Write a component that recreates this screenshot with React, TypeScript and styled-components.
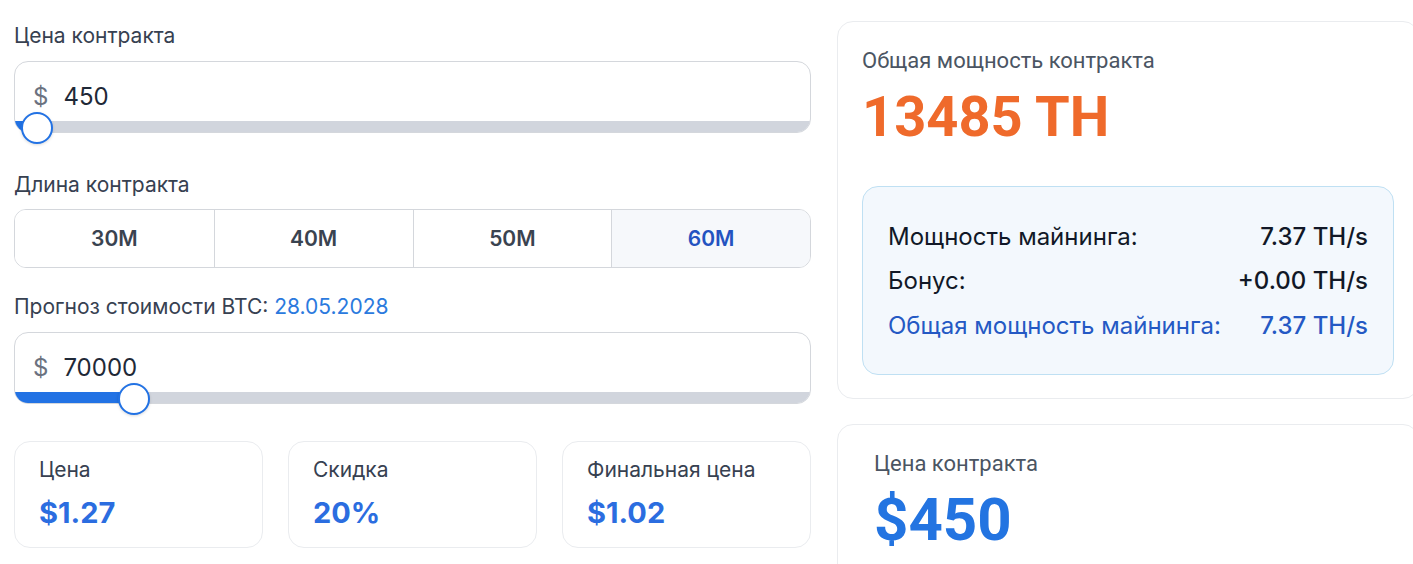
import React from "react";
import styled, { createGlobalStyle } from "styled-components";

const GlobalStyle = createGlobalStyle`
  html, body {
    margin: 0;
    padding: 0;
    background: #ffffff;
    overflow: hidden;
  }
  body {
    font-family: Inter, "Noto Sans", sans-serif;
    color: #1f2937;
  }
`;

const Page = styled.div`
  display: grid;
  grid-template-columns: 797px 582px;
  column-gap: 26px;
  padding: 22px 0 0 14px;
  width: 1440px;
  height: 564px;
  box-sizing: border-box;
  overflow: hidden;
`;

const LeftColumn = styled.div`
  display: flex;
  flex-direction: column;
`;

const RightColumn = styled.div`
  display: flex;
  flex-direction: column;
  gap: 25px;
  margin-top: -1px;
`;

const Label = styled.div<{ $top?: number; $bottom?: number }>`
  font-size: 21px;
  line-height: 28px;
  color: #374151;
  margin-top: ${(p) => p.$top ?? 0}px;
  margin-bottom: ${(p) => p.$bottom ?? 11}px;
`;

const DateText = styled.span`
  color: #2b7ade;
`;

const SliderField = styled.div`
  position: relative;
`;

const FieldBox = styled.div`
  border: 1px solid #d4d7dc;
  border-radius: 14px;
  overflow: hidden;
  background: #fff;
  display: flex;
  flex-direction: column;
`;

const FieldValue = styled.div`
  display: flex;
  align-items: center;
  gap: 15px;
  height: 49px;
  padding: 10px 0 0 18px;
  font-size: 24px;
  color: #1f2937;
`;

const Currency = styled.span`
  color: #6b7280;
`;

const Track = styled.div`
  height: 11px;
  background: #d1d5dd;
  position: relative;
`;

const TrackFill = styled.div`
  position: absolute;
  left: 0;
  top: 0;
  bottom: 0;
  background: #2272e4;
`;

const Thumb = styled.div`
  position: absolute;
  bottom: -11px;
  width: 28px;
  height: 28px;
  margin-left: -16px;
  border-radius: 50%;
  background: #fff;
  border: 2px solid #2272e4;
  box-shadow: 0 1px 3px rgba(0, 0, 0, 0.15);
`;

const Segmented = styled.div`
  display: grid;
  grid-template-columns: repeat(4, 1fr);
  border: 1px solid #d4d7dc;
  border-radius: 12px;
  overflow: hidden;
  height: 59px;
  box-sizing: border-box;
`;

const Segment = styled.div<{ $active?: boolean }>`
  display: flex;
  align-items: center;
  justify-content: center;
  font-size: 21px;
  font-weight: 600;
  color: ${(p) => (p.$active ? "#2453c0" : "#3a4350")};
  background: ${(p) => (p.$active ? "#f6f8fb" : "#fff")};
  border-left: 1px solid #d4d7dc;
  &:first-child {
    border-left: none;
  }
`;

const StatsRow = styled.div`
  display: grid;
  grid-template-columns: repeat(3, 1fr);
  gap: 25px;
  margin-top: 37px;
`;

const StatCard = styled.div`
  border: 1px solid #eaecef;
  border-radius: 16px;
  height: 107px;
  box-sizing: border-box;
  padding: 14px 24px 0;
`;

const StatLabel = styled.div`
  font-size: 21px;
  line-height: 28px;
  color: #374151;
`;

const StatValue = styled.div`
  font-size: 29px;
  line-height: 40px;
  font-weight: 700;
  color: #2b6de0;
  margin-top: 9px;
`;

const Card = styled.div<{ $pad: string }>`
  border: 1px solid #eaecef;
  border-radius: 16px;
  padding: ${(p) => p.$pad};
  box-sizing: border-box;
  font-family: Roboto, "Noto Sans", sans-serif;
`;

const CardLabel = styled.div`
  font-size: 22px;
  line-height: 28px;
  color: #4b5563;
`;

const BigNumber = styled.div<{ $color: string; $size: number }>`
  font-size: ${(p) => p.$size}px;
  line-height: 64px;
  font-weight: 700;
  color: ${(p) => p.$color};
  margin-top: 10px;
`;

const InfoBox = styled.div`
  margin-top: 37px;
  background: #f3f8fd;
  border: 1px solid #bfe0f3;
  border-radius: 16px;
  padding: 34px 25px;
  display: flex;
  flex-direction: column;
  gap: 14.5px;
  font-family: Inter, "Noto Sans", sans-serif;
`;

const InfoRow = styled.div<{ $accent?: boolean }>`
  display: flex;
  justify-content: space-between;
  align-items: center;
  height: 30px;
  font-size: 24px;
  color: ${(p) => (p.$accent ? "#2459c4" : "#111827")};
`;

const InfoValue = styled.span`
  font-weight: 500;
`;

function PriceSlider({
  value,
  percent,
  fill,
}: {
  value: string;
  percent: number;
  fill: number;
}) {
  return (
    <SliderField>
      <FieldBox>
        <FieldValue>
          <Currency>$</Currency>
          <span>{value}</span>
        </FieldValue>
        <Track>
          <TrackFill style={{ width: `${fill}%` }} />
        </Track>
      </FieldBox>
      <Thumb style={{ left: `${percent}%` }} />
    </SliderField>
  );
}

export default function App() {
  const lengths = ["30M", "40M", "50M", "60M"];
  return (
    <>
      <GlobalStyle />
      <Page>
        <LeftColumn>
          <Label>Цена контракта</Label>
          <PriceSlider value="450" percent={2.9} fill={1} />

          <Label $top={38} $bottom={10}>
            Длина контракта
          </Label>
          <Segmented>
            {lengths.map((l) => (
              <Segment key={l} $active={l === "60M"}>
                {l}
              </Segment>
            ))}
          </Segmented>

          <Label $top={25}>
            Прогноз стоимости BTC: <DateText>28.05.2028</DateText>
          </Label>
          <PriceSlider value="70000" percent={15.05} fill={15.05} />

          <StatsRow>
            <StatCard>
              <StatLabel>Цена</StatLabel>
              <StatValue>$1.27</StatValue>
            </StatCard>
            <StatCard>
              <StatLabel>Скидка</StatLabel>
              <StatValue>20%</StatValue>
            </StatCard>
            <StatCard>
              <StatLabel>Финальная цена</StatLabel>
              <StatValue>$1.02</StatValue>
            </StatCard>
          </StatsRow>
        </LeftColumn>

        <RightColumn>
          <Card $pad="25px 24px 23px">
            <CardLabel>Общая мощность контракта</CardLabel>
            <BigNumber $color="#ef6a2b" $size={56}>
              13485 TH
            </BigNumber>
            <InfoBox>
              <InfoRow>
                <span>Мощность майнинга:</span>
                <InfoValue>7.37 TH/s</InfoValue>
              </InfoRow>
              <InfoRow>
                <span>Бонус:</span>
                <InfoValue>+0.00 TH/s</InfoValue>
              </InfoRow>
              <InfoRow $accent>
                <span>Общая мощность майнинга:</span>
                <InfoValue>7.37 TH/s</InfoValue>
              </InfoRow>
            </InfoBox>
          </Card>
          <Card $pad="25px 36px 40px">
            <CardLabel>Цена контракта</CardLabel>
            <BigNumber $color="#2374e1" $size={60}>
              $450
            </BigNumber>
          </Card>
        </RightColumn>
      </Page>
    </>
  );
}
